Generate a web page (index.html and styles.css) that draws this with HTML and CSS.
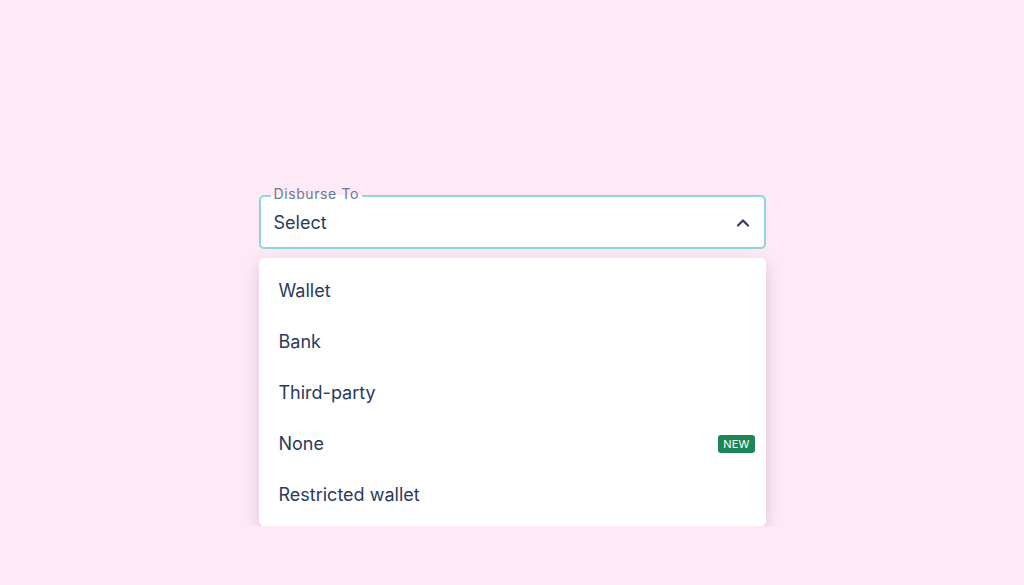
FILE: index.html
```html
<!DOCTYPE html>
<html>
<head>
<meta charset="utf-8">
<link rel="stylesheet" href="styles.css">
</head>
<body>
<div class="wrap">
  <fieldset class="field">
    <legend class="label">Disburse To</legend>
    <div class="row">
      <span class="value">Select</span>
      <svg class="chev" width="14" height="9" viewBox="0 0 14 9"><path d="M2 7.5 L7 2.5 L12 7.5" fill="none" stroke="#2f3d5c" stroke-width="2.2" stroke-linecap="round" stroke-linejoin="round"/></svg>
    </div>
  </fieldset>
  <ul class="menu">
    <li class="item">Wallet</li>
    <li class="item">Bank</li>
    <li class="item">Third-party</li>
    <li class="item">None <span class="badge">NEW</span></li>
    <li class="item">Restricted wallet</li>
  </ul>
</div>
</body>
</html>
```
FILE: styles.css
```css
html, body {
  margin: 0;
  padding: 0;
  background: #feeaf7;
  font-family: Inter, "Noto Sans", sans-serif;
  color: #2c3a5b;
}
.wrap {
  width: 507px;
  margin: 0 auto;
  padding-top: 186px;
}
.field {
  margin: 0;
  padding: 0 14px 9px 13px;
  border: 2px solid #8cd8d6;
  border-radius: 5px;
  background: #ffffff;
  min-width: 0;
}
.label {
  margin-left: -3px;
  padding: 0 3px 4px 3px;
  font-size: 14px;
  line-height: 16px;
  letter-spacing: 0.6px;
  color: #6c7791;
}
.row {
  height: 32px;
  display: flex;
  align-items: center;
  justify-content: space-between;
}
.value {
  font-size: 18px;
  color: #2c3a5b;
}
.chev {
  display: block;
}
.menu {
  list-style: none;
  margin: 9px 0 0 0;
  padding: 7px 0 6px 0;
  background: #ffffff;
  border-radius: 5px;
  box-shadow: 0 6px 16px rgba(130, 80, 130, 0.26);
}
.item {
  height: 51px;
  display: flex;
  align-items: center;
  justify-content: space-between;
  padding: 0 11px 0 20px;
  font-size: 18px;
}
.badge {
  background: #1c8656;
  color: #ffffff;
  font-size: 11px;
  line-height: 18px;
  padding: 0 5px;
  border-radius: 3px;
  letter-spacing: 0.2px;
}
```
